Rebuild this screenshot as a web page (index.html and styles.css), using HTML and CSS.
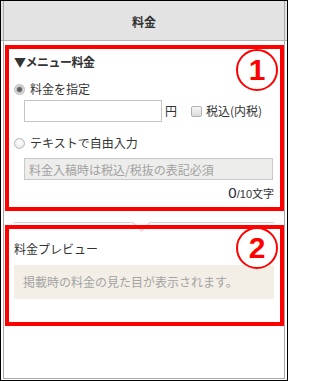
FILE: index.html
```html
<!DOCTYPE html>
<html lang="ja">
<head>
<meta charset="utf-8">
<link rel="stylesheet" href="styles.css">
</head>
<body>
<div class="frame">
  <div class="header">料金</div>
  <div class="panel">
    <div class="section">
      <div class="title">▼メニュー料金</div>
      <label class="radio-row r1"><input type="radio" name="p" class="radio" checked><span>料金を指定</span></label>
      <div class="price-row">
        <input type="text" class="price-input">
        <span class="yen">円</span>
        <label class="tax"><input type="checkbox" class="check"><span>税込(内税)</span></label>
      </div>
      <label class="radio-row r2"><input type="radio" name="p" class="radio"><span>テキストで自由入力</span></label>
      <input type="text" class="free-input" placeholder="料金入稿時は税込/税抜の表記必須" disabled>
      <div class="counter"><span class="num">0</span><span class="max">/10</span><span class="unit">文字</span></div>
    </div>
    <div class="separator"><span class="notch"></span></div>
    <div class="preview">
      <div class="preview-title">料金プレビュー</div>
      <div class="preview-box">掲載時の料金の見た目が表示されます。</div>
    </div>
  </div>
  <div class="mark mark1"></div>
  <div class="mark mark2"></div>
  <div class="num-circle c1">1</div>
  <div class="num-circle c2">2</div>
</div>
</body>
</html>
```

FILE: styles.css
```css
html, body {
  margin: 0;
  padding: 0;
  background: #fff;
}
body {
  font-family: "Noto Sans CJK JP", "Noto Sans", sans-serif;
  font-size: 12px;
  color: #333;
}
.frame {
  position: relative;
  width: 288px;
  height: 381px;
  box-sizing: border-box;
  border: 1px solid #000;
  overflow: hidden;
  background: #fff;
}
.header {
  height: 39px;
  border-bottom: 1px solid #b4b4b4;
  background:
    linear-gradient(to right, transparent 2px, #a9a9a9 2px, #a9a9a9 3px, transparent 3px,
      transparent calc(100% - 3px), #a9a9a9 calc(100% - 3px), #a9a9a9 calc(100% - 2px), transparent calc(100% - 2px)),
    #e3e3e3;
  text-align: center;
  line-height: 41px;
  font-weight: bold;
  font-size: 12px;
  color: #333;
}
.panel {
  margin: 0 2px;
  height: 338px;
  box-sizing: border-box;
  border: 1px solid #a9a9a9;
  border-top: none;
}
.section {
  padding: 13px 10px 0 10px;
}
.title {
  font-weight: bold;
  line-height: 16px;
  height: 16px;
  letter-spacing: -0.5px;
}
.radio-row {
  display: flex;
  align-items: center;
  height: 16px;
  line-height: 16px;
}
.r1 { margin-top: 11px; }
.r2 { margin-top: 13px; }
.radio {
  appearance: none;
  -webkit-appearance: none;
  margin: 0 5px 0 0;
  width: 11px;
  height: 11px;
  border-radius: 50%;
  border: 1px solid #b9b9b9;
  box-sizing: border-box;
  background: radial-gradient(circle at 50% 40%, #ffffff 0, #e6e6e6 80%);
}
.radio:checked {
  background: radial-gradient(circle, #555 0, #666 2px, #bbb 3px, #dcdcdc 4px, #f2f2f2 6px);
}
.price-row {
  display: flex;
  align-items: center;
  margin-top: 3px;
  margin-left: 10px;
  height: 22px;
}
.price-input {
  width: 138px;
  height: 22px;
  box-sizing: border-box;
  border: 1px solid #c4c4c4;
  margin: 0;
  padding: 0 4px;
  background: #fff;
  font: inherit;
}
.yen {
  margin-left: 3px;
  line-height: 16px;
}
.tax {
  display: flex;
  align-items: center;
  margin-left: 14px;
  line-height: 16px;
}
.check {
  appearance: none;
  -webkit-appearance: none;
  margin: 0 4px 0 0;
  width: 11px;
  height: 11px;
  box-sizing: border-box;
  border: 1px solid #b2b2b2;
  border-radius: 2px;
  background: linear-gradient(#f6f6f6, #dcdcdc);
}
.free-input {
  display: block;
  margin: 7px 0 0 10px;
  width: 249px;
  height: 22px;
  box-sizing: border-box;
  border: 1px solid #c8c8c8;
  background: #ededeb;
  padding: 0 4px;
  font: inherit;
  font-size: 12px;
}
.free-input::placeholder {
  color: #a2a2a2;
}
.counter {
  margin-top: 5px;
  text-align: right;
  height: 16px;
  line-height: 16px;
  color: #333;
}
.counter .num {
  font-family: "Liberation Sans", Arial, sans-serif;
  font-size: 15px;
  color: #2c2c44;
}
.counter .max {
  font-family: "Liberation Sans", Arial, sans-serif;
  font-size: 11px;
}
.counter .unit {
  font-size: 11px;
}
.separator {
  position: relative;
  margin: 21px 10px 0 10px;
  border-top: 1px solid #d2d2d2;
  height: 0;
}
.notch {
  position: absolute;
  left: 121px;
  top: -7px;
  width: 12px;
  height: 12px;
  background: #fff;
  border-right: 1px solid #d2d2d2;
  border-bottom: 1px solid #d2d2d2;
  transform: rotate(45deg);
}
.preview {
  padding: 18px 10px 0 10px;
}
.preview-title {
  line-height: 16px;
  height: 16px;
}
.preview-box {
  margin-top: 8px;
  height: 34px;
  background: #f3efe7;
  color: #a3a3a3;
  line-height: 34px;
  padding-left: 9px;
  font-size: 12px;
}
.mark {
  position: absolute;
  left: 4px;
  width: 279px;
  box-sizing: border-box;
  border: 4px solid #ff0000;
}
.mark1 { top: 44px; height: 166px; }
.mark2 { top: 224px; height: 101px; }
.num-circle {
  position: absolute;
  left: 235px;
  width: 42px;
  height: 42px;
  box-sizing: border-box;
  border: 2px solid #ff0000;
  border-radius: 50%;
  background: #fff;
  color: #ff0000;
  font-family: "Liberation Sans", Arial, sans-serif;
  font-weight: bold;
  font-size: 30px;
  line-height: 38px;
  text-align: center;
}
.c1 { top: 48px; }
.c2 { top: 226px; }
```
